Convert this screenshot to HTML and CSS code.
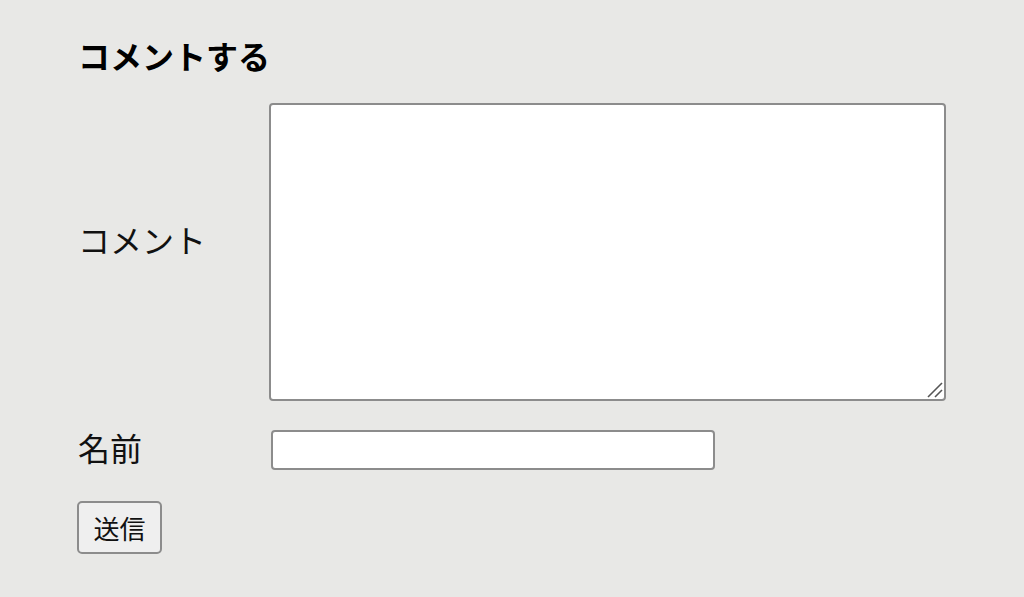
FILE: index.html
```html
<!DOCTYPE html>
<html lang="ja">
<head>
    <meta charset="UTF-8">
    <meta name="viewport" content="width=device-width, initial-scale=1.0">
    <title>コメントする</title>
    <link rel="stylesheet" href="styles.css">
</head>
<body>
    <div class="comment-form">
        <h2>コメントする</h2>

        <form>
            <div class="form-row row-comment">
                <label for="comment">コメント</label>
                <div class="textarea-wrap">
                    <textarea id="comment" name="comment"></textarea>
                    <svg class="grip" width="16" height="16" viewBox="0 0 16 16">
                        <line x1="1" y1="15" x2="15" y2="1" stroke="#555" stroke-width="1.6"/>
                        <line x1="8" y1="15" x2="15" y2="8" stroke="#555" stroke-width="1.6"/>
                    </svg>
                </div>
            </div>

            <div class="form-row row-name">
                <label for="name">名前</label>
                <input type="text" id="name" name="name">
            </div>

            <button type="submit">送信</button>
        </form>
    </div>
</body>
</html>
```

FILE: styles.css
```css
body {
    margin: 0;
    background-color: #e8e8e6;
    font-family: "Noto Sans CJK JP", "Noto Sans", sans-serif;
    color: #111;
}
.comment-form {
    padding: 32px 78px 0;
}
h2 {
    margin: 0 0 25px;
    font-size: 32px;
    line-height: 46px;
    font-weight: bold;
    color: #000;
}
.form-row {
    display: flex;
    align-items: center;
}
.form-row label {
    width: 191px;
    font-size: 32px;
    line-height: 46px;
}
.row-comment label {
    padding-bottom: 26px;
}
.textarea-wrap {
    position: relative;
}
textarea {
    display: block;
    box-sizing: border-box;
    width: 677px;
    height: 298px;
    margin: 0;
    border: 2px solid #8c8c8c;
    border-radius: 4px;
    background: #fff;
    resize: none;
}
.grip {
    position: absolute;
    right: 3px;
    bottom: 3px;
}
.row-name {
    margin-top: 29px;
}
.row-name label {
    line-height: 34px;
    padding-bottom: 6px;
}
input {
    box-sizing: border-box;
    width: 444px;
    height: 40px;
    margin: 0 0 0 2px;
    border: 2px solid #8c8c8c;
    border-radius: 4px;
    background: #fff;
}
button {
    display: block;
    box-sizing: border-box;
    width: 85px;
    height: 53px;
    margin: 31px 0 0 -1px;
    padding: 0;
    border: 2px solid #8c8c8c;
    border-radius: 5px;
    background: #efefef;
    font-family: "Noto Sans CJK JP", sans-serif;
    font-size: 26px;
    color: #111;
}
```
